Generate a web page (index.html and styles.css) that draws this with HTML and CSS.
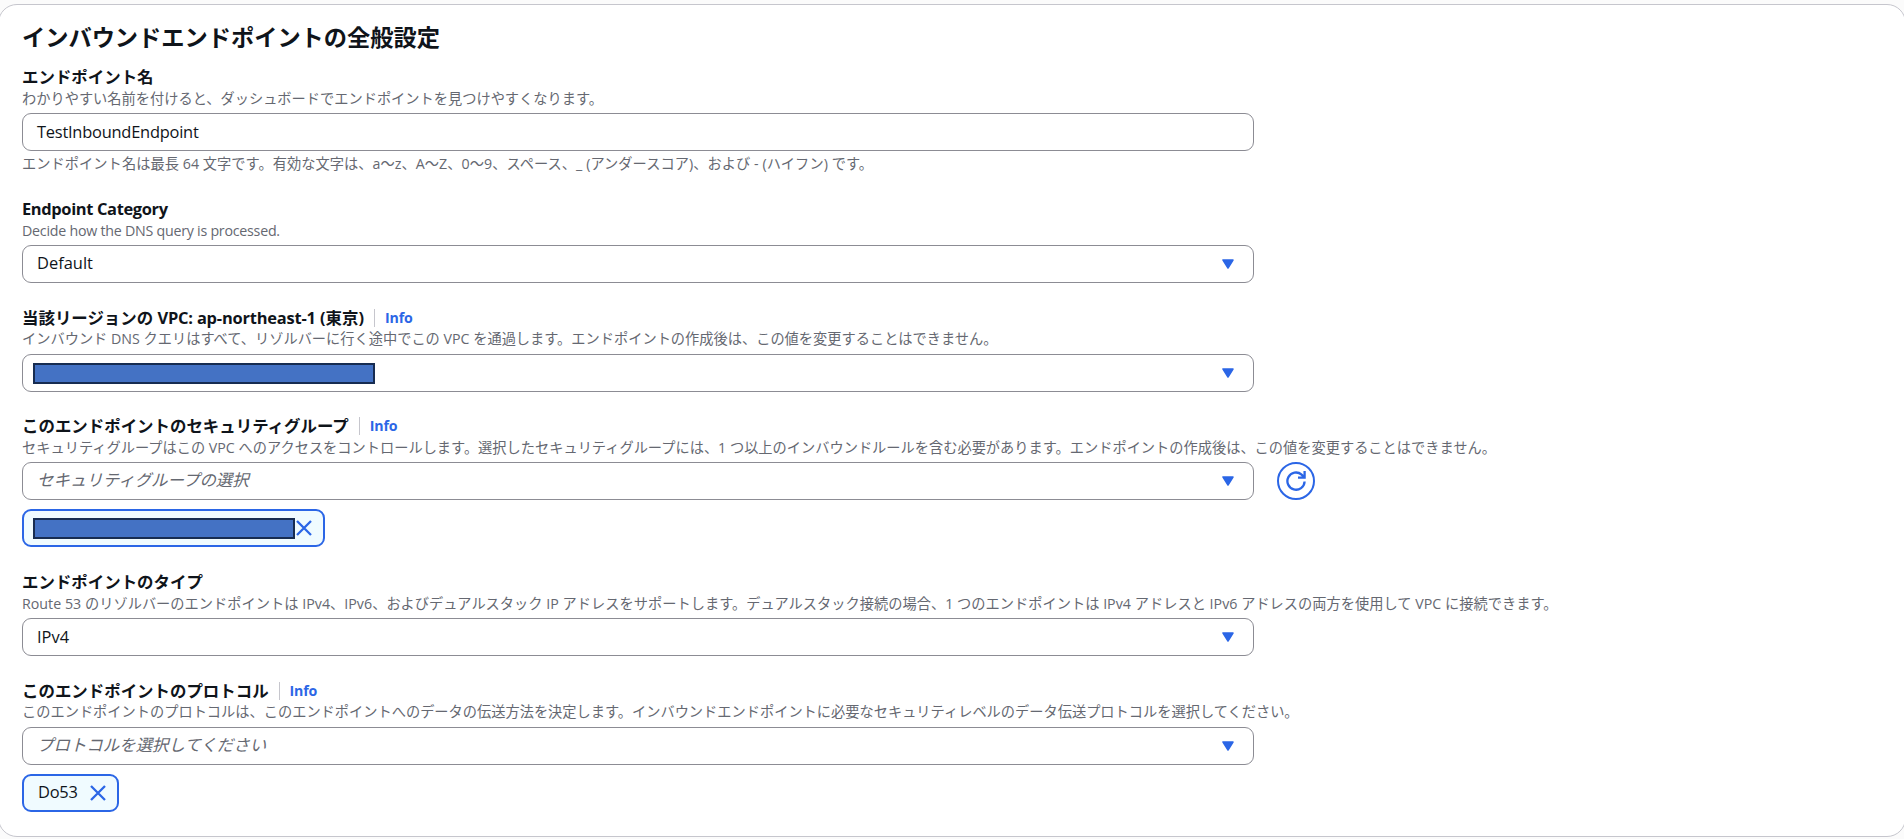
FILE: index.html
```
<!DOCTYPE html>
<html lang="ja">
<head>
  <meta charset="UTF-8">
  <meta name="viewport" content="width=device-width, initial-scale=1.0">
  <title>インバウンドエンドポイントの全般設定</title>
  <link rel="stylesheet" href="styles.css">
</head>
<body>
  <main class="card">
    <h1>インバウンドエンドポイントの全般設定</h1>

    <div class="field">
      <div class="label high"><span>エンドポイント名</span></div>
      <p class="desc">わかりやすい名前を付けると、ダッシュボードでエンドポイントを見つけやすくなります。</p>
      <div class="control"><span class="latin">TestInboundEndpoint</span></div>
      <p class="hint">エンドポイント名は最長 64 文字です。有効な文字は、a～z、A～Z、0～9、スペース、_ (アンダースコア)、および - (ハイフン) です。</p>
    </div>

    <div class="field">
      <div class="label"><span class="latin-bold">Endpoint Category</span></div>
      <p class="desc latin">Decide how the DNS query is processed.</p>
      <div class="control">
        <span>Default</span>
        <svg class="arrow" viewBox="0 0 12 10"><path d="M1 1h10L6 9z"/></svg>
      </div>
    </div>

    <div class="field">
      <div class="label"><span>当該リージョンの <span class="region">VPC: ap-northeast-1</span> (東京)</span><a class="info">Info</a></div>
      <p class="desc raised">インバウンド DNS クエリはすべて、リゾルバーに行く途中でこの VPC を通過します。エンドポイントの作成後は、この値を変更することはできません。</p>
      <div class="control">
        <span class="mask mask-vpc"></span>
        <svg class="arrow" viewBox="0 0 12 10"><path d="M1 1h10L6 9z"/></svg>
      </div>
    </div>

    <div class="field">
      <div class="label high"><span>このエンドポイントのセキュリティグループ</span><a class="info">Info</a></div>
      <p class="desc">セキュリティグループはこの VPC へのアクセスをコントロールします。選択したセキュリティグループには、1 つ以上のインバウンドルールを含む必要があります。エンドポイントの作成後は、この値を変更することはできません。</p>
      <div class="row">
        <div class="control">
          <span class="placeholder">セキュリティグループの選択</span>
          <svg class="arrow" viewBox="0 0 12 10"><path d="M1 1h10L6 9z"/></svg>
        </div>
        <button class="refresh" aria-label="更新">
          <svg viewBox="0 0 20 20"><path d="M18.6 10.5A8.6 8.6 0 1 1 15.6 3.6L18 6M18.6 0v6.6H12"/></svg>
        </button>
      </div>
      <div class="token token-group">
        <span class="mask mask-group"></span>
        <svg class="close" viewBox="0 0 16 16"><path d="M1 1l14 14M15 1L1 15"/></svg>
      </div>
    </div>

    <div class="field">
      <div class="label high"><span>エンドポイントのタイプ</span></div>
      <p class="desc wide">Route 53 のリゾルバーのエンドポイントは IPv4、IPv6、およびデュアルスタック IP アドレスをサポートします。デュアルスタック接続の場合、1 つのエンドポイントは IPv4 アドレスと IPv6 アドレスの両方を使用して VPC に接続できます。</p>
      <div class="control">
        <span>IPv4</span>
        <svg class="arrow" viewBox="0 0 12 10"><path d="M1 1h10L6 9z"/></svg>
      </div>
    </div>

    <div class="field">
      <div class="label"><span>このエンドポイントのプロトコル</span><a class="info">Info</a></div>
      <p class="desc raised">このエンドポイントのプロトコルは、このエンドポイントへのデータの伝送方法を決定します。インバウンドエンドポイントに必要なセキュリティレベルのデータ伝送プロトコルを選択してください。</p>
      <div class="control">
        <span class="placeholder">プロトコルを選択してください</span>
        <svg class="arrow" viewBox="0 0 12 10"><path d="M1 1h10L6 9z"/></svg>
      </div>
      <div class="token">
        <span class="latin">Do53</span>
        <svg class="close" viewBox="0 0 16 16"><path d="M1 1l14 14M15 1L1 15"/></svg>
      </div>
    </div>
  </main>
</body>
</html>
```
FILE: styles.css
```
* {
  box-sizing: border-box;
}
body {
  margin: 0;
  height: 839px;
  overflow: hidden;
  padding-top: 4px;
  background: #fbfbfb;
  color: #0f141a;
  font-family: "Open Sans", "Noto Sans CJK JP", sans-serif;
  font-size: 16.45px;
}
.card {
  margin: 0 -2px;
  height: 833px;
  padding: 13px 23px 0;
  background: #fff;
  border: 1px solid #c6c6cd;
  border-radius: 19px;
}
h1 {
  margin: 0 0 9px;
  font-size: 23.22px;
  line-height: 38px;
  font-weight: 700;
}
.field {
  display: flex;
  flex-direction: column;
  margin-bottom: 22.8px;
}
.label {
  display: flex;
  align-items: center;
  height: 24px;
  padding-bottom: 1px;
  font-weight: 700;
  white-space: nowrap;
}
.label.high {
  padding-bottom: 3px;
}
.info {
  position: relative;
  top: 1px;
  margin-left: 10px;
  padding-left: 10px;
  border-left: 1px solid #c6c6cd;
  color: #2b66e6;
  font-size: 14.2px;
  line-height: 18px;
  letter-spacing: -0.2px;
}
.latin {
  letter-spacing: -0.24px;
}
.latin-bold {
  letter-spacing: -0.36px;
}
.region {
  letter-spacing: -0.2px;
}
.desc,
.hint {
  margin: 0;
  height: 20px;
  line-height: 20px;
  font-size: 14.22px;
  color: #656871;
  white-space: nowrap;
}
.desc {
  margin-bottom: 4px;
}
.desc.raised {
  margin: -1px 0 5px;
}
.desc.wide {
  letter-spacing: 0.02px;
}
.hint {
  margin-top: 3px;
  letter-spacing: 0.05px;
}
.row {
  display: flex;
  gap: 23px;
}
.control {
  display: flex;
  align-items: center;
  justify-content: space-between;
  width: 1232px;
  height: 38px;
  padding: 0 19px 0 14px;
  border: 1px solid #8c8c94;
  border-radius: 9px;
  background: #fff;
}
.control span:not(.mask),
.token span:not(.mask) {
  padding-bottom: 2px;
}
.control .placeholder:not(.mask) {
  padding-bottom: 4px;
  color: #656871;
  font-style: italic;
}
.arrow {
  width: 12px;
  height: 10px;
  fill: #2b66e6;
  stroke: #2b66e6;
  stroke-width: 1.5;
  stroke-linejoin: round;
}
.refresh {
  width: 38px;
  height: 38px;
  padding: 0;
  display: flex;
  align-items: center;
  justify-content: center;
  border: 2px solid #2b66e6;
  border-radius: 50%;
  background: #fff;
}
.refresh svg {
  width: 20px;
  height: 20px;
  fill: none;
  stroke: #2b66e6;
  stroke-width: 2.3;
}
.token {
  display: flex;
  align-items: center;
  justify-content: space-between;
  width: 97px;
  height: 38px;
  margin-top: 9px;
  padding: 0 11px 0 14px;
  border: 2px solid #2b66e6;
  border-radius: 9px;
  background: #f0fbff;
}
.token-group {
  width: 303px;
  padding-left: 9px;
}
.close {
  width: 16px;
  height: 16px;
  fill: none;
  stroke: #2b66e6;
  stroke-width: 2.3;
}
.mask {
  position: relative;
  top: 1px;
  height: 21px;
  background: #4472c4;
  border: 2px solid #172c51;
}
.mask-vpc {
  width: 342px;
  margin-left: -4px;
}
.mask-group {
  top: 0;
  width: 262px;
}
```
